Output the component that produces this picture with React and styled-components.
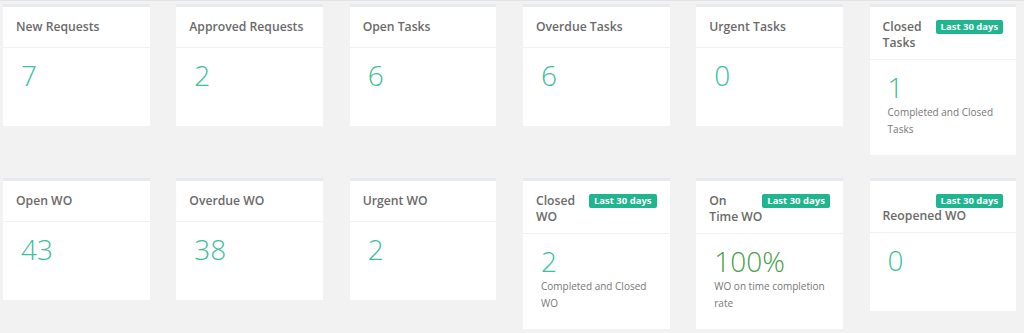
import React from "react";
import styled, { createGlobalStyle } from "styled-components";

const GlobalStyle = createGlobalStyle`
  * { box-sizing: border-box; }
  body {
    margin: 0;
    background: #f2f2f2;
    font-family: "Open Sans", "Liberation Sans", sans-serif;
  }
`;

const Page = styled.main`
  min-height: 333px;
  border-top: 1px solid #e3e3e3;
  padding: 3px 0 0 3px;
`;

const Grid = styled.div`
  display: grid;
  grid-template-columns: repeat(6, 146.67px);
  column-gap: 26.67px;
  row-gap: 23px;
  align-items: start;
`;

const Card = styled.section`
  background: #fff;
  border-top: 3px solid #e6e9ed;
`;

const Header = styled.div`
  min-height: 41px;
  padding: 12px 13px 8px;
  border-bottom: 1px solid #f1f1f1;
`;

const Title = styled.h5`
  margin: 0;
  font-size: 12.2px;
  line-height: 16px;
  font-weight: 600;
  color: #6a6a6a;
`;

const Badge = styled.span`
  float: right;
  margin: 1px 0 0 6px;
  height: 14px;
  padding: 0 5px;
  border-radius: 2px;
  background: #1eb58f;
  color: #fff;
  font-size: 9.5px;
  line-height: 14px;
  font-weight: 700;
  white-space: nowrap;
`;

const Body = styled.div`
  min-height: 78px;
  padding: 11px 18px 17px;
`;

const Value = styled.div`
  font-size: 28px;
  line-height: 33px;
  font-weight: 300;
  color: ${(p) => (p.$rate ? "#45a046" : "#3cc09c")};
`;

const Note = styled.div`
  font-size: 10px;
  line-height: 17px;
  color: #777;
`;

const cards = [
  { title: "New Requests", value: "7" },
  { title: "Approved Requests", value: "2" },
  { title: "Open Tasks", value: "6" },
  { title: "Overdue Tasks", value: "6" },
  { title: "Urgent Tasks", value: "0" },
  { title: "Closed Tasks", value: "1", badge: true, note: "Completed and Closed Tasks" },
  { title: "Open WO", value: "43" },
  { title: "Overdue WO", value: "38" },
  { title: "Urgent WO", value: "2" },
  { title: "Closed WO", value: "2", badge: true, note: "Completed and Closed WO" },
  { title: "On Time WO", value: "100%", badge: true, rate: true, note: "WO on time completion rate" },
  { title: "Reopened WO", value: "0", badge: true },
];

const StatCard = ({ title, value, badge, note, rate }) => (
  <Card>
    <Header>
      <Title>
        {badge && <Badge>Last 30 days</Badge>}
        {title}
      </Title>
    </Header>
    <Body>
      <Value $rate={rate}>{value}</Value>
      {note && <Note>{note}</Note>}
    </Body>
  </Card>
);

export default function App() {
  return (
    <>
      <GlobalStyle />
      <Page>
        <Grid>
          {cards.map((c) => (
            <StatCard key={c.title} {...c} />
          ))}
        </Grid>
      </Page>
    </>
  );
}
